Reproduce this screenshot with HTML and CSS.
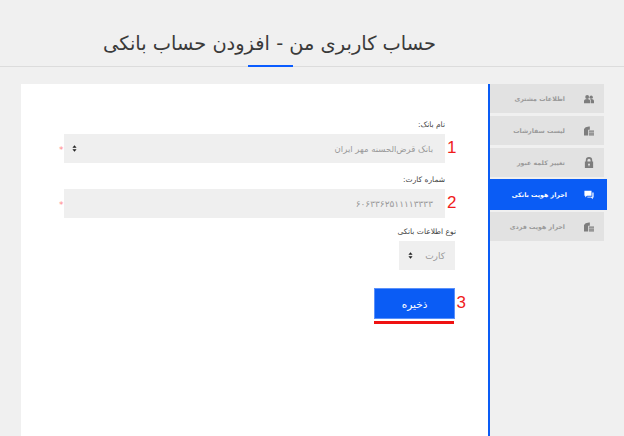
FILE: index.html
```html
<!DOCTYPE html>
<html lang="fa">
<head>
<meta charset="utf-8">
<title>افزودن حساب بانکی</title>
<link rel="stylesheet" href="styles.css">
</head>
<body>
<header class="head">
  <h1 class="title" dir="rtl">حساب کاربری من - افزودن حساب بانکی</h1>
</header>
<main class="main">
  <section class="panel">
    <div class="group">
      <label class="label" dir="rtl">نام بانک:</label>
      <div class="row">
        <span class="req">*</span>
        <div class="field">
          <svg class="arrows" viewBox="0 0 6 8"><path d="M3 0 5.500 3H.5zM3 8 .5 5h5z"/></svg>
          <span class="value" dir="rtl">بانک قرض‌الحسنه مهر ایران</span>
        </div>
        <span class="num">1</span>
      </div>
    </div>
    <div class="group second">
      <label class="label" dir="rtl">شماره کارت:</label>
      <div class="row">
        <span class="req">*</span>
        <div class="field">
          <span class="value card" dir="rtl">۶۰۶۳۳۶۲۵۱۱۱۱۳۳۳۳</span>
        </div>
        <span class="num">2</span>
      </div>
    </div>
    <div class="typegroup">
      <label class="label" dir="rtl">نوع اطلاعات بانکی</label>
      <div class="select">
        <svg class="arrows" viewBox="0 0 6 8"><path d="M3 0 5.500 3H.5zM3 8 .5 5h5z"/></svg>
        <span class="selectval" dir="rtl">کارت</span>
      </div>
    </div>
    <div class="actions">
      <div class="btncol">
        <button class="save" type="button" dir="rtl">ذخیره</button>
        <div class="redline"></div>
      </div>
      <span class="num num3">3</span>
    </div>
  </section>
  <nav class="side">
    <a class="item">
      <span class="text" dir="rtl">اطلاعات مشتری</span>
      <svg class="ic" viewBox="0 0 12 10"><circle cx="3.800" cy="2.600" r="2.300"/><circle cx="8.600" cy="2.800" r="2"/><path d="M0 10V7.600C0 6 1.600 5 3.800 5s3.600 1 3.600 2.600V10zM8.200 10V7.300c0-.9-.3-1.500-.8-2 .4-.1.800-.2 1.200-.2 2 0 3.400.9 3.400 2.400V10z"/></svg>
    </a>
    <a class="item">
      <span class="text" dir="rtl">لیست سفارشات</span>
      <svg class="ic" viewBox="0 0 12 11"><path d="M2 1 6 0h1v4H5v7H0V3z"/><path d="M6 5h6v1.500H6zM6 7.250h6v1.500H6zM6 9.500h6V11H6z"/></svg>
    </a>
    <a class="item">
      <span class="text" dir="rtl">تغییر کلمه عبور</span>
      <svg class="ic lock" viewBox="0 0 10 12"><path d="M5 0a3.500 3.500 0 0 0-3.500 3.500V5H.5v7h9V5h-1V3.500A3.500 3.500 0 0 0 5 0m0 1.800a1.700 1.700 0 0 1 1.700 1.700V5H3.300V3.500A1.700 1.700 0 0 1 5 1.800M5 7a1 1 0 0 1 .5 1.900V10h-1V8.900A1 1 0 0 1 5 7" fill-rule="evenodd"/></svg>
    </a>
    <a class="item active">
      <span class="text" dir="rtl">احراز هویت بانکی</span>
      <svg class="ic" viewBox="0 0 12 10"><path d="M.5 0h8.500v6H3.500L1.500 8V6h-1z"/><path d="M10 2h1.500v6h-1v2l-2-2H4V7h6z"/></svg>
    </a>
    <a class="item">
      <span class="text" dir="rtl">احراز هویت فردی</span>
      <svg class="ic" viewBox="0 0 12 11"><path d="M2 1 6 0h1v4H5v7H0V3z"/><path d="M6 5h6v1.500H6zM6 7.250h6v1.500H6zM6 9.500h6V11H6z"/></svg>
    </a>
  </nav>
</main>
</body>
</html>
```
FILE: styles.css
```css
* { box-sizing: border-box; }
html, body { margin: 0; height: 100%; }
body {
  width: 624px;
  height: 436px;
  overflow: hidden;
  background: #f0f0f0;
  color: #333;
  font-family: "DejaVu Sans", "Noto Sans", sans-serif;
}
.head {
  height: 67px;
  border-bottom: 1px solid #dcdcdc;
  position: relative;
  padding: 30px 188px 0 104px;
}
.head::after {
  content: "";
  position: absolute;
  left: 248px;
  bottom: -1px;
  width: 45px;
  height: 2px;
  background: #0a5cff;
}
.title {
  margin: 0;
  font-size: 19.4px;
  font-weight: 400;
  line-height: 27px;
  white-space: nowrap;
  color: #3a3a3a;
  text-align: center;
}
.main {
  display: flex;
  margin: 17px 0 0 21px;
  height: 352px;
}
.panel {
  width: 467px;
  background: #fff;
  padding: 34px 0 0 33px;
  display: flex;
  flex-direction: column;
}
.group { display: flex; flex-direction: column; align-items: flex-end; padding-right: 43px; }
.second { margin-top: 10px; }
.label { font-size: 7.5px; line-height: 13px; padding-bottom: 3px; color: #444; white-space: nowrap; }
.row { display: flex; align-items: center; position: relative; }
.req { position: absolute; left: 5px; top: 11px; color: #ff8a8a; font-size: 9px; line-height: 10px; }
.field {
  margin-left: 10px;
  width: 381px;
  height: 29px;
  background: #efefef;
  display: flex;
  align-items: center;
  justify-content: space-between;
  padding: 0 12px 0 8px;
}
.field .card { margin-left: auto; }
.arrows { width: 5px; height: 7px; fill: #222; flex: none; }
.value { font-size: 8.5px; color: #999; white-space: nowrap; }
.card { font-size: 9px; letter-spacing: 0.4px; }
.num { position: absolute; left: 393px; top: 3px; color: #f01c1c; font: 17px/22px "Liberation Sans", sans-serif; }
.typegroup {
  display: flex;
  flex-direction: column;
  align-items: flex-end;
  margin-top: 7px;
  padding-right: 32px;
}
.select {
  width: 56px;
  height: 29px;
  margin-right: 1px;
  background: #efefef;
  display: flex;
  align-items: center;
  justify-content: space-between;
  padding: 0 10px 0 9px;
}
.selectval { font-size: 9px; color: #999; }
.actions {
  display: flex;
  justify-content: flex-end;
  align-items: flex-start;
  margin-top: 18px;
  padding-right: 33px;
  position: relative;
}
.btncol { width: 81px; }
.save {
  display: block;
  width: 81px;
  height: 31px;
  border: 1px solid #5a90fa;
  background: #0a5cf5;
  color: #fff;
  font: 10.5px "DejaVu Sans", sans-serif;
  padding: 0;
}
.redline { width: 80px; height: 3px; margin-top: 2px; background: #ef1212; }
.num3 { left: auto; right: 22px; top: 4px; }
.side {
  width: 119px;
  border-left: 2px solid #0a5cf5;
  display: flex;
  flex-direction: column;
  gap: 3px;
}
.item {
  width: 114px;
  height: 29px;
  background: #e2e2e2;
  color: #9a9a9a;
  display: flex;
  align-items: center;
  justify-content: flex-end;
  gap: 19px;
  padding-right: 10px;
  font-size: 6.3px;
  font-weight: 700;
}
.text { white-space: nowrap; }
.ic { width: 10px; height: 10px; fill: #7d7d7d; flex: none; }
.lock { height: 11px; }
.active {
  width: 117px;
  height: 31px;
  background: #0a5cf5;
  color: #fff;
  margin: -1px 0;
  padding-right: 13px;
  gap: 17px;
}
.active .ic { fill: #fff; }
```
